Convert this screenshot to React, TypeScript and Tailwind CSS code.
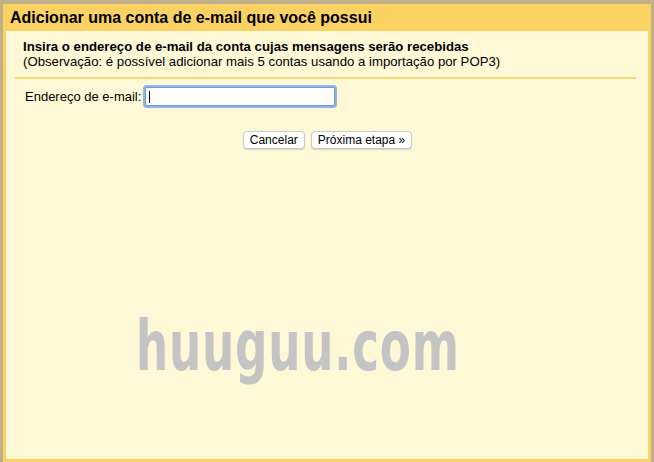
import React from "react";

export default function App() {
  return (
    <div
      className="w-[654px] h-[462px] bg-[#bfb08a] pt-[4px] pl-[3px] pr-[3px] overflow-hidden"
      style={{ fontFamily: '"Liberation Sans", Arial, sans-serif' }}
    >
      <div className="h-[458px] bg-[#fad163] border-x-[3px] border-b-[3px] border-[#fad163] flex flex-col">
        <div className="h-[27px] flex items-center pl-[4px] text-[16px] font-bold text-black shrink-0">
          Adicionar uma conta de e-mail que você possui
        </div>
        <div className="flex-1 bg-[#fff8d7] flex flex-col relative overflow-hidden">
          <div className="pt-[8px] pl-[17px] text-[13.2px] leading-[15px] text-black">
            <div className="font-bold">Insira o endereço de e-mail da conta cujas mensagens serão recebidas</div>
            <div>(Observação: é possível adicionar mais 5 contas usando a importação por POP3)</div>
          </div>
          <div className="mt-[8px] ml-[9px] mr-[12px] h-[2px] bg-[#f6d873]" />
          <div className="flex items-center mt-[8px] ml-[19px] gap-[4px] text-[13px] text-black">
            <span>Endereço de e-mail:</span>
            <div className="w-[190px] h-[19px] bg-white border border-[#7a9bc7] rounded-[2px] shadow-[0_0_0_2px_#8db6e6] flex items-center pl-[3px]">
              <div className="w-[1px] h-[12px] bg-black" />
            </div>
          </div>
          <div className="flex justify-center gap-[6px] mt-[24px] pl-[1px] text-[12px] text-black">
            <button className="h-[18px] px-[6px] bg-white border border-[#c8c8c8] rounded-[4px] shadow-[0_1px_1px_rgba(0,0,0,0.15)] leading-none">
              Cancelar
            </button>
            <button className="h-[18px] px-[6px] bg-white border border-[#c8c8c8] rounded-[4px] shadow-[0_1px_1px_rgba(0,0,0,0.15)] leading-none">
              Próxima etapa »
            </button>
          </div>
          <div
            className="absolute left-[130px] top-[280px] text-[70px] leading-none text-[#c4c4c4] origin-left scale-x-[0.72] tracking-[1px]"
            style={{ fontFamily: '"DejaVu Sans Condensed", sans-serif', fontWeight: 700 }}
          >
            huuguu.com
          </div>
        </div>
      </div>
    </div>
  );
}
